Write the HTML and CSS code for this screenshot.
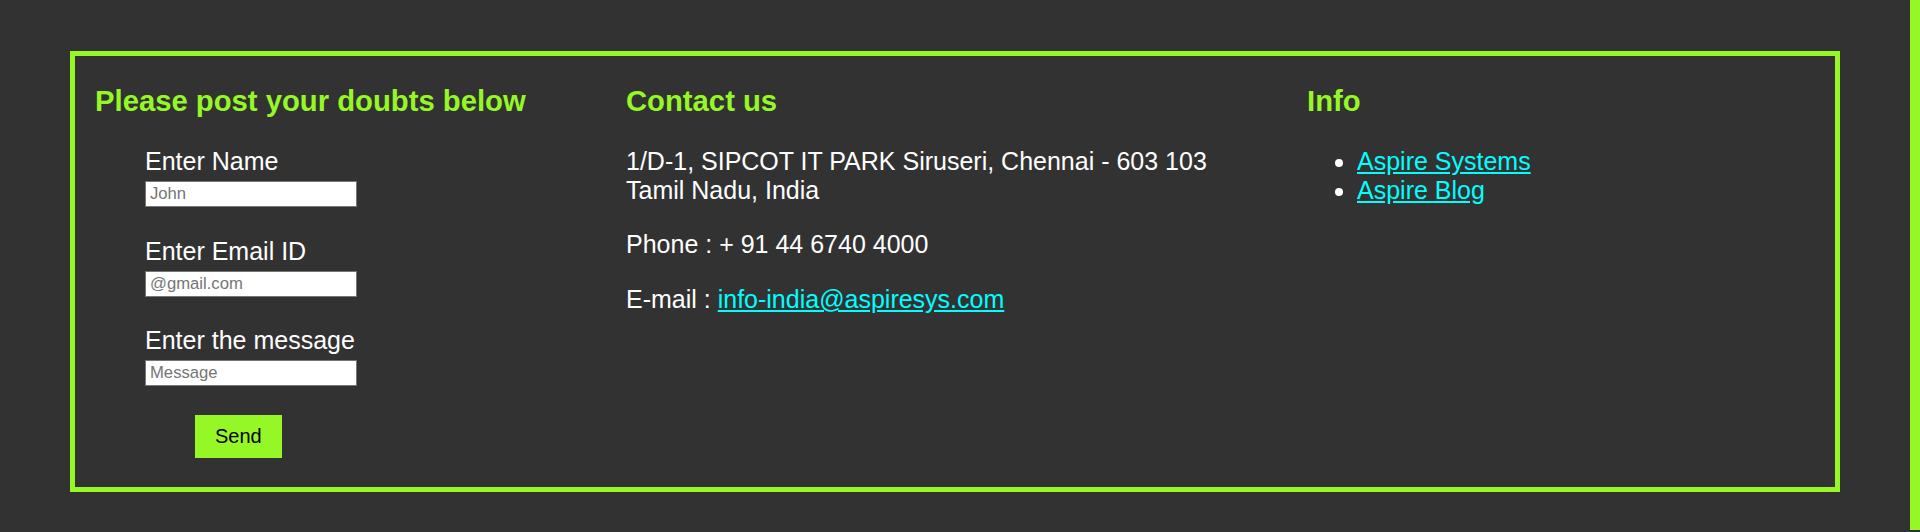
FILE: index.html
```html
<!DOCTYPE html>
<html lang="en">
<head>
<meta charset="utf-8">
<title>Contact</title>
<link rel="stylesheet" href="styles.css">
</head>
<body>
<div class="page">
  <footer class="box">
    <section class="col col-form">
      <h3 class="heading">Please post your doubts below</h3>
      <form class="form">
        <div class="group">
          <label class="label" for="name">Enter Name</label>
          <input class="field" id="name" type="text" placeholder="John">
        </div>
        <div class="group">
          <label class="label" for="email">Enter Email ID</label>
          <input class="field" id="email" type="text" placeholder="@gmail.com">
        </div>
        <div class="group">
          <label class="label" for="msg">Enter the message</label>
          <input class="field" id="msg" type="text" placeholder="Message">
        </div>
        <div class="actions">
          <button class="send" type="button">Send</button>
        </div>
      </form>
    </section>
    <section class="col col-contact">
      <h3 class="heading">Contact us</h3>
      <p class="text">1/D-1, SIPCOT IT PARK Siruseri, Chennai - 603 103<br>Tamil Nadu, India</p>
      <p class="text">Phone : + 91 44 6740 4000</p>
      <p class="text">E-mail : <a class="link" href="#">info-india@aspiresys.com</a></p>
    </section>
    <section class="col col-info">
      <h3 class="heading">Info</h3>
      <ul class="list">
        <li class="item"><a class="link" href="#">Aspire Systems</a></li>
        <li class="item"><a class="link" href="#">Aspire Blog</a></li>
      </ul>
    </section>
  </footer>
</div>
<div class="bar"></div>
</body>
</html>
```
FILE: styles.css
```css
html, body {
  margin: 0;
  padding: 0;
  background: #323232;
}
body {
  display: flex;
  align-items: flex-start;
  font-family: "Liberation Sans", Arial, sans-serif;
  color: #ffffff;
  min-height: 532px;
}
.page {
  flex: 1;
  padding: 51px 70px 0 70px;
}
.bar {
  width: 10px;
  height: 530px;
  background: #96f727;
  flex: none;
}
.box {
  border: 5px solid #96f727;
  padding: 28px 20px 29px 20px;
  display: grid;
  grid-template-columns: 531px 681px 1fr;
}
.heading {
  margin: 0 0 29px 0;
  font-size: 29.25px;
  line-height: 34px;
  font-weight: bold;
  color: #96f727;
}
.form {
  padding-left: 50px;
  display: flex;
  flex-direction: column;
  gap: 29.5px;
}
.group {
  display: flex;
  flex-direction: column;
  align-items: flex-start;
  gap: 6px;
}
.label {
  font-size: 25px;
  line-height: 28px;
  color: #ffffff;
}
.field {
  box-sizing: border-box;
  width: 212px;
  height: 26px;
  margin: 0;
  padding: 1px 4px;
  border: 1px solid #767676;
  background: #ffffff;
  font-family: "Liberation Sans", Arial, sans-serif;
  font-size: 16.67px;
  color: #000;
  outline: none;
}
.field::placeholder {
  color: #757575;
}
.actions {
  padding-left: 50px;
  margin-top: -0.5px;
}
.send {
  margin: 0;
  border: none;
  background: #96f727;
  color: #000000;
  font-family: "Liberation Sans", Arial, sans-serif;
  font-size: 20px;
  line-height: 23px;
  padding: 10px 20px;
  cursor: pointer;
}
.text {
  margin: 0 0 26px 0;
  font-size: 25px;
  line-height: 28.7px;
}
.link {
  color: #00ffff;
  text-decoration: underline;
}
.list {
  margin: 0;
  padding-left: 50px;
  font-size: 25px;
  line-height: 28.7px;
}
.item {
  list-style: disc;
}
```
